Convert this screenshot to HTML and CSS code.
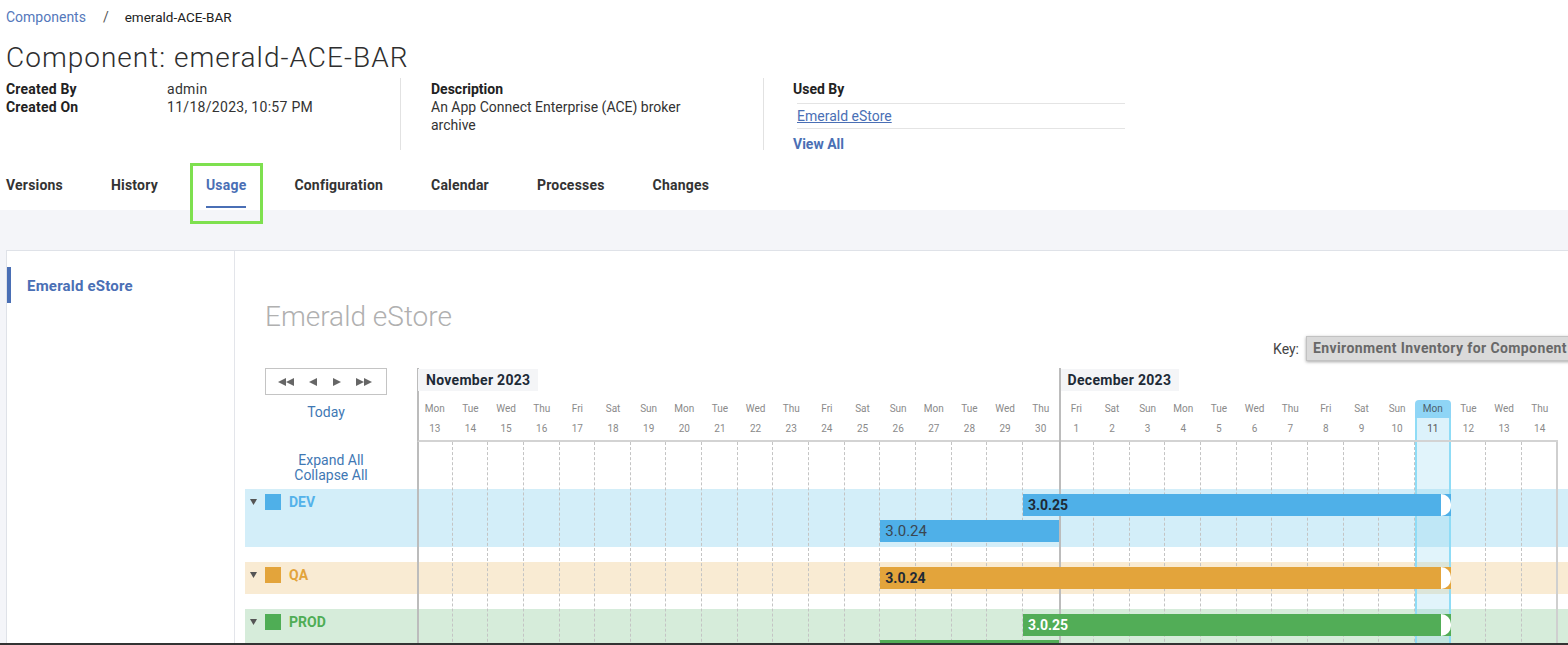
FILE: index.html
```html
<!DOCTYPE html>
<html lang="en">
<head>
<meta charset="utf-8">
<title>Component: emerald-ACE-BAR</title>
<link rel="stylesheet" href="styles.css">
</head>
<body>
<header class="page-head">
  <nav class="crumbs">
    <a class="crumb-link" href="#">Components</a>
    <span class="crumb-sep">/</span>
    <span class="crumb-current">emerald-ACE-BAR</span>
  </nav>
  <h1 class="page-title">Component: emerald-ACE-BAR</h1>
  <div class="meta">
    <dl class="meta-created">
      <dt>Created By</dt><dd>admin</dd>
      <dt>Created On</dt><dd>11/18/2023, 10:57 PM</dd>
    </dl>
    <div class="meta-desc">
      <div class="meta-label">Description</div>
      <p>An App Connect Enterprise (ACE) broker archive</p>
    </div>
    <div class="meta-used">
      <div class="meta-label">Used By</div>
      <ul class="used-list"><li><a href="#">Emerald eStore</a></li></ul>
      <a class="view-all" href="#">View All</a>
    </div>
  </div>
  <nav class="tabs">
    <a class="tab" href="#">Versions</a>
    <a class="tab" href="#">History</a>
    <a class="tab tab-active" href="#">Usage</a>
    <a class="tab" href="#">Configuration</a>
    <a class="tab" href="#">Calendar</a>
    <a class="tab" href="#">Processes</a>
    <a class="tab" href="#">Changes</a>
  </nav>
</header>

<main class="usage-area">
  <div class="panel">
    <aside class="side">
      <div class="side-item">Emerald eStore</div>
    </aside>
    <section class="content">
      <h2 class="app-title">Emerald eStore</h2>
      <div class="key-row">
        <span class="key-label">Key:</span>
        <span class="key-box">Environment Inventory for Component</span>
      </div>

      <div class="gantt">
        <div class="g-grid g-head">
          <div class="g-ctrl">
            <div class="nav-box">
              <svg width="16" height="8" viewBox="0 0 16 8"><polygon points="8,0 0,4 8,8" /><polygon points="16,0 8,4 16,8" /></svg>
              <svg width="10" height="8" viewBox="0 0 10 8"><polygon points="9,0 1,4 9,8" /></svg>
              <svg width="10" height="8" viewBox="0 0 10 8"><polygon points="1,0 9,4 1,8" /></svg>
              <svg width="16" height="8" viewBox="0 0 16 8"><polygon points="0,0 8,4 0,8" /><polygon points="8,0 16,4 8,8" /></svg>
            </div>
            <div class="today-link">Today</div>
          </div>
          <div class="g-frame"></div>
          <div class="g-month nov"><span class="g-month-name">November 2023</span></div>
          <div class="g-month dec"><span class="g-month-name">December 2023</span></div>
          <div class="g-days">
            <div class="g-day"><span class="dn">Mon</span><span class="dd">13</span></div>
            <div class="g-day"><span class="dn">Tue</span><span class="dd">14</span></div>
            <div class="g-day"><span class="dn">Wed</span><span class="dd">15</span></div>
            <div class="g-day"><span class="dn">Thu</span><span class="dd">16</span></div>
            <div class="g-day"><span class="dn">Fri</span><span class="dd">17</span></div>
            <div class="g-day"><span class="dn">Sat</span><span class="dd">18</span></div>
            <div class="g-day"><span class="dn">Sun</span><span class="dd">19</span></div>
            <div class="g-day"><span class="dn">Mon</span><span class="dd">20</span></div>
            <div class="g-day"><span class="dn">Tue</span><span class="dd">21</span></div>
            <div class="g-day"><span class="dn">Wed</span><span class="dd">22</span></div>
            <div class="g-day"><span class="dn">Thu</span><span class="dd">23</span></div>
            <div class="g-day"><span class="dn">Fri</span><span class="dd">24</span></div>
            <div class="g-day"><span class="dn">Sat</span><span class="dd">25</span></div>
            <div class="g-day"><span class="dn">Sun</span><span class="dd">26</span></div>
            <div class="g-day"><span class="dn">Mon</span><span class="dd">27</span></div>
            <div class="g-day"><span class="dn">Tue</span><span class="dd">28</span></div>
            <div class="g-day"><span class="dn">Wed</span><span class="dd">29</span></div>
            <div class="g-day"><span class="dn">Thu</span><span class="dd">30</span></div>
            <div class="g-day"><span class="dn">Fri</span><span class="dd">1</span></div>
            <div class="g-day"><span class="dn">Sat</span><span class="dd">2</span></div>
            <div class="g-day"><span class="dn">Sun</span><span class="dd">3</span></div>
            <div class="g-day"><span class="dn">Mon</span><span class="dd">4</span></div>
            <div class="g-day"><span class="dn">Tue</span><span class="dd">5</span></div>
            <div class="g-day"><span class="dn">Wed</span><span class="dd">6</span></div>
            <div class="g-day"><span class="dn">Thu</span><span class="dd">7</span></div>
            <div class="g-day"><span class="dn">Fri</span><span class="dd">8</span></div>
            <div class="g-day"><span class="dn">Sat</span><span class="dd">9</span></div>
            <div class="g-day"><span class="dn">Sun</span><span class="dd">10</span></div>
            <div class="g-day today"><span class="dn">Mon</span><span class="dd">11</span></div>
            <div class="g-day"><span class="dn">Tue</span><span class="dd">12</span></div>
            <div class="g-day"><span class="dn">Wed</span><span class="dd">13</span></div>
            <div class="g-day"><span class="dn">Thu</span><span class="dd">14</span></div>
          </div>
        </div>

        <div class="g-grid g-body">
          <div class="g-bg dev"></div>
          <div class="g-bg qa"></div>
          <div class="g-bg prod"></div>
          <div class="g-lines">
            <div class="gl first"></div><div class="gl"></div><div class="gl"></div><div class="gl"></div>
            <div class="gl"></div><div class="gl"></div><div class="gl"></div><div class="gl"></div>
            <div class="gl"></div><div class="gl"></div><div class="gl"></div><div class="gl"></div>
            <div class="gl"></div><div class="gl"></div><div class="gl"></div><div class="gl"></div>
            <div class="gl"></div><div class="gl m-end"></div><div class="gl m-start"></div><div class="gl"></div>
            <div class="gl"></div><div class="gl"></div><div class="gl"></div><div class="gl"></div>
            <div class="gl"></div><div class="gl"></div><div class="gl"></div><div class="gl"></div>
            <div class="gl"></div><div class="gl"></div><div class="gl"></div><div class="gl last"></div>
          </div>
          <div class="g-today"></div>

          <div class="g-expand">
            <a href="#">Expand All</a>
            <a href="#">Collapse All</a>
          </div>

          <div class="g-label dev"><svg class="caret" width="7" height="6" viewBox="0 0 7 6"><polygon points="0,0 7,0 3.5,6" /></svg><span class="swatch"></span><span class="env-name">DEV</span></div>
          <div class="g-label qa"><svg class="caret" width="7" height="6" viewBox="0 0 7 6"><polygon points="0,0 7,0 3.5,6" /></svg><span class="swatch"></span><span class="env-name">QA</span></div>
          <div class="g-label prod"><svg class="caret" width="7" height="6" viewBox="0 0 7 6"><polygon points="0,0 7,0 3.5,6" /></svg><span class="swatch"></span><span class="env-name">PROD</span></div>

          <div class="bar dev current first-row" style="grid-column: 19 / 31">3.0.25</div>
          <div class="bar dev past second-row" style="grid-column: 15 / 20">3.0.24</div>
          <div class="bar qa current qa-row" style="grid-column: 15 / 31">3.0.24</div>
          <div class="bar prod current prod-row" style="grid-column: 19 / 31">3.0.25</div>
          <div class="bar prod past prod-row2" style="grid-column: 15 / 20">3.0.24</div>
        </div>
      </div>
    </section>
  </div>
</main>
<div class="bottom-edge"></div>
</body>
</html>
```

FILE: styles.css
```css
* { box-sizing: border-box; }
html, body { margin: 0; padding: 0; overflow: hidden; }
body {
  width: 1568px;
  height: 645px;
  font-family: Roboto, "Liberation Sans", Arial, sans-serif;
  color: #333;
  background: #fff;
}
a { color: inherit; text-decoration: none; }

/* ---------- page header ---------- */
.page-head { height: 210px; padding: 7px 0 0 6px; background: #fff; }
.crumbs { display: flex; align-items: center; height: 20px; font-size: 14px; line-height: 20px; }
.crumb-link { color: #5478bb; }
.crumb-sep { margin: 0 16px 0 17px; color: #555; }
.crumb-current { color: #222; font-size: 13.5px; }

.page-title {
  margin: 14px 0 0;
  font-size: 28px;
  line-height: 34px;
  font-weight: 300;
  letter-spacing: 1px;
  color: #2e2e2e;
}

.meta { display: flex; margin-top: 3px; height: 72px; font-size: 14px; line-height: 18px; }
.meta-created {
  margin: 0;
  padding-top: 2px;
  width: 394px;
  display: grid;
  grid-template-columns: 161px auto;
  align-content: start;
}
.meta-created dt { font-weight: 700; color: #222; letter-spacing: 0.2px; }
.meta-created dd { margin: 0; color: #333; letter-spacing: 0.3px; }
.meta-desc { width: 363px; border-left: 1px solid #e2e2e2; padding: 2px 0 0 30px; }
.meta-label { font-weight: 700; color: #222; }
.meta-desc p { margin: 0; max-width: 280px; color: #333; }
.meta-used { border-left: 1px solid #e2e2e2; padding: 2px 0 0 29px; }
.used-list { list-style: none; margin: 5px 0 0 4px; padding: 0; width: 328px; border-top: 1px solid #e4e4e4; }
.used-list li { height: 25px; line-height: 24px; border-bottom: 1px solid #e4e4e4; }
.used-list a { color: #4a6fb5; text-decoration: underline; }
.view-all { display: block; margin-top: 6px; font-weight: 700; color: #4a6fb5; }

.tabs { display: flex; gap: 48px; margin-top: 14px; }
.tab {
  position: relative;
  height: 44px;
  padding-top: 11px;
  line-height: 20px;
  font-size: 14px;
  font-weight: 700;
  letter-spacing: 0.2px;
  color: #333;
  border-bottom: 2px solid transparent;
}
.tab-active { color: #4a6fb5; border-bottom-color: #4a6fb5; }
.tab-active::before {
  content: "";
  position: absolute;
  left: -16px;
  right: -17px;
  top: -1px;
  bottom: -18px;
  border: 3px solid #7ee04f;
}

/* ---------- usage area ---------- */
.usage-area { height: 435px; padding: 40px 0 0 6px; background: #f4f5f9; }
.panel {
  display: flex;
  width: 1600px;
  height: 100%;
  background: #fff;
  border-top: 1px solid #dfe2e8;
  border-left: 1px solid #dfe2e8;
}
.side { flex: none; width: 228px; padding-top: 16px; border-right: 1px solid #e3e5ea; }
.side-item {
  height: 36px;
  padding: 3px 0 0 16px;
  line-height: 33px;
  border-left: 4px solid #4a6fb5;
  font-size: 15px;
  font-weight: 700;
  letter-spacing: 0.2px;
  color: #4a6fb5;
}

.content { flex: 1; min-width: 0; padding: 48px 0 0 10px; }
.app-title {
  margin: 0 0 0 20px;
  font-size: 28px;
  line-height: 36px;
  font-weight: 300;
  color: #b0b0b0;
}
.key-row {
  display: flex;
  justify-content: flex-end;
  align-items: center;
  gap: 7px;
  height: 25px;
  margin-top: 1px;
  padding-right: 28px;
  font-size: 14px;
}
.key-label { color: #444; }
.key-box {
  height: 25px;
  line-height: 23px;
  padding: 0 10px 0 6px;
  background: #dadada;
  border: 1px solid #c2c2c2;
  box-shadow: 0 1px 3px rgba(0, 0, 0, 0.35);
  font-weight: 700;
  letter-spacing: 0.4px;
  color: #686868;
}

/* ---------- gantt ---------- */
.gantt { margin-top: 7px; }
.g-grid {
  display: grid;
  grid-template-columns: 172px repeat(32, 35.656px) minmax(0, 1fr);
}
.g-head { grid-template-rows: 23px 9px 18px 24px; }

.g-ctrl { grid-column: 1; grid-row: 1 / -1; padding-left: 20px; }
.nav-box {
  display: flex;
  align-items: center;
  gap: 14px;
  width: 122px;
  height: 27px;
  padding: 0 12px;
  border: 1px solid #c4c4c4;
}
.nav-box svg { fill: #666; flex: none; }
.today-link {
  width: 122px;
  margin-top: 9px;
  line-height: 16px;
  text-align: center;
  font-size: 14px;
  color: #3f78b4;
}

.g-frame {
  grid-column: 2 / 34;
  grid-row: 1 / -1;
  border-left: 2px solid #bcbcbc;
  border-bottom: 2px solid #d3d3d3;
}
.g-month { grid-row: 1 / -1; }
.g-month.nov { grid-column: 2 / 20; padding-left: 1px; }
.g-month.dec { grid-column: 20 / 34; border-left: 2px solid #bcbcbc; }
.g-month-name {
  display: inline-block;
  margin-top: 1px;
  padding: 0 8px 0 8px;
  line-height: 22px;
  background: #f4f5f7;
  font-size: 14px;
  font-weight: 700;
  letter-spacing: 0.3px;
  color: #1d2a36;
}
.g-month.dec .g-month-name { padding-left: 7px; }

.g-days {
  grid-column: 2 / 34;
  grid-row: 3 / 5;
  display: grid;
  grid-template-columns: repeat(32, 35.656px);
}
.g-day { display: flex; flex-direction: column; text-align: center; font-size: 10px; color: #8a8a8a; }
.g-day .dn { height: 18px; line-height: 18px; }
.g-day .dd { height: 22px; line-height: 22px; }
.g-day.today .dn { background: #8fd5f6; border-radius: 4px 4px 0 0; color: #4d5f6c; }
.g-day.today .dd { background: #dcf2fb; border-left: 2px solid #8fdcf6; border-right: 2px solid #8fdcf6; color: #555; }

.g-body { grid-template-rows: 47px 27px 31px 15px 32px 15px 27px 31px; }
.g-bg { grid-column: 1 / -1; }
.g-bg.dev { grid-row: 2 / 4; background: #d3eef9; }
.g-bg.qa { grid-row: 5; background: #f9ebd3; }
.g-bg.prod { grid-row: 7 / 9; background: #d6ecda; }

.g-lines {
  grid-column: 2 / 34;
  grid-row: 1 / -1;
  display: grid;
  grid-template-columns: repeat(32, 35.656px);
}
.gl { border-right: 1px dashed #c4c4c4; }
.gl.first { border-left: 2px solid #bcbcbc; }
.gl.m-end { border-right: none; }
.gl.m-start { border-left: 2px solid #bcbcbc; }
.gl.last { border-right: 2px solid #cfcfcf; }

.g-today {
  grid-column: 30;
  grid-row: 1 / -1;
  border-left: 2px solid #8fdcf6;
  border-right: 2px solid #8fdcf6;
  background: rgba(130, 208, 240, 0.24);
}

.g-expand {
  grid-column: 1;
  grid-row: 1;
  display: flex;
  flex-direction: column;
  align-items: center;
  padding-top: 11px;
  font-size: 14px;
  line-height: 15px;
  color: #3f78b4;
}

.g-label {
  grid-column: 1;
  display: flex;
  align-items: center;
  height: 16px;
  margin-top: 5px;
  padding-left: 5px;
  font-size: 14px;
  font-weight: 700;
}
.g-label.dev { grid-row: 2; color: #54b2ea; }
.g-label.qa { grid-row: 5; color: #e3a43b; }
.g-label.prod { grid-row: 7; color: #4fad55; }
.caret { fill: #555; margin-right: 8px; }
.swatch { width: 16px; height: 16px; margin-right: 8px; background: currentColor; }
.g-label.dev .swatch { background: #4fb0e8; }

.bar {
  position: relative;
  height: 22px;
  line-height: 22px;
  padding-left: 5px;
  font-size: 14px;
  font-weight: 700;
  color: #1e2a36;
  white-space: nowrap;
}
.bar.current::after {
  content: "";
  position: absolute;
  top: 0;
  right: 0;
  width: 10px;
  height: 100%;
  background: #fff;
  border-radius: 0 11px 11px 0;
}
.bar.dev { background: #4fb0e8; }
.bar.qa { background: #e3a43b; }
.bar.prod { background: #52ad57; color: #fff; }
.bar.dev.past { font-weight: 400; font-size: 15px; color: #3b4752; }
.first-row { grid-row: 2; margin-top: 5px; }
.second-row { grid-row: 3; margin-top: 4px; }
.qa-row { grid-row: 5; margin-top: 5px; }
.prod-row { grid-row: 7; margin-top: 5px; }
.prod-row2 { grid-row: 8; margin-top: 4px; }

.bottom-edge {
  position: fixed;
  left: 0;
  right: 0;
  bottom: 0;
  height: 2px;
  background: #333;
}
```
